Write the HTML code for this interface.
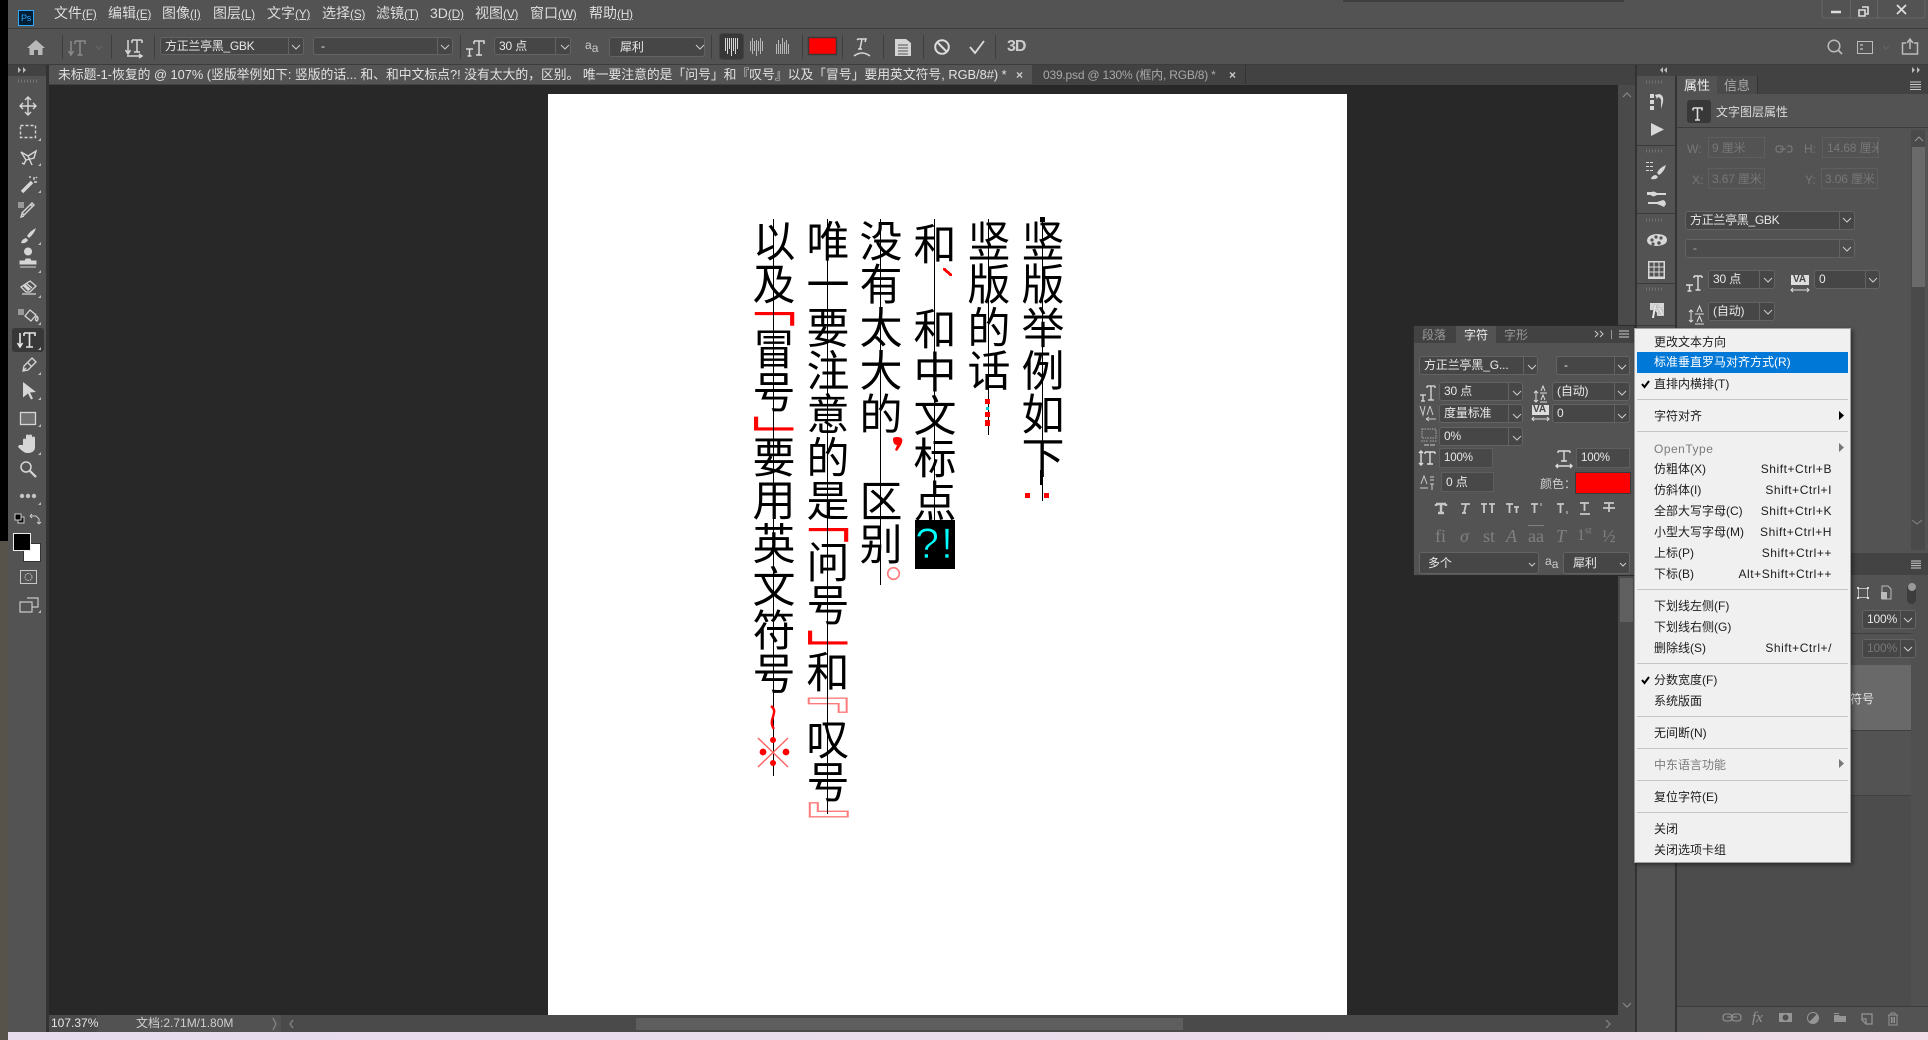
<!DOCTYPE html>
<html lang="zh"><head><meta charset="utf-8"><title>Photoshop</title>
<style>
html,body{margin:0;padding:0;width:1928px;height:1040px;overflow:hidden;background:#535353}
body{position:relative;font-family:"Liberation Sans","Noto Sans CJK SC",sans-serif;color:#dcdcdc;font-size:12px}
.a,.t,.f,.m,.col,.d{position:absolute}
.t{white-space:nowrap;height:16px;line-height:16px}
.f{box-sizing:border-box;background:#464646;border:1px solid #636363;border-radius:3px;color:#e8e8e8;line-height:17px;padding-left:4px;white-space:nowrap;overflow:hidden;font-size:12px;letter-spacing:-.15px}
.f i{position:absolute;top:0;bottom:0;width:1px;background:#636363}
.s{box-sizing:border-box;border-radius:0;border-color:#5e5e5e;background:#484848}
.dim{color:#777}
.n{font-size:14px;color:#dedede}
.n u{font-size:12px;letter-spacing:-.3px}
.m{left:1654px;width:178px;height:18px;line-height:18px;color:#1c1c1c;font-size:12px;white-space:nowrap}
.m b{position:absolute;right:0;top:0;font-weight:400;letter-spacing:.55px}
.d{left:1637px;width:211px;height:1px;background:#c4c4c4}
.col{writing-mode:vertical-rl;text-orientation:upright;font:400 43px/43px "Noto Sans CJK SC",sans-serif;color:#000;white-space:nowrap;width:43px;letter-spacing:.3px}
.r{color:#f00}.p{color:#ff7b7b}
.l{position:absolute;width:1px;background:#000}
u{text-decoration:underline}
</style></head><body>

<!-- backgrounds -->
<div class="a" style="left:0;top:0;width:8px;height:541px;background:#000"></div>
<div class="a" style="left:0;top:541px;width:8px;height:499px;background:#57534a"></div>
<div class="a" style="left:8px;top:1032px;width:1920px;height:8px;background:linear-gradient(90deg,#e6dcee,#eadcec 50%,#f1dce8)"></div>
<div class="a" style="left:8px;top:28px;width:1920px;height:1px;background:#3c3c3c"></div>
<div class="a" style="left:8px;top:64px;width:1920px;height:1px;background:#3c3c3c"></div>
<div class="a" style="left:1343px;top:0;width:281px;height:2px;background:#3f3f3f"></div>

<!-- tab row -->
<div class="a" style="left:46px;top:65px;width:1589px;height:20px;background:#424242"></div>
<div class="a" style="left:48px;top:65px;width:984px;height:19px;background:#545454"></div>
<div class="a" style="left:1245px;top:65px;width:1px;height:19px;background:#333"></div>
<!-- toolbar -->
<div class="a" style="left:8px;top:65px;width:38px;height:967px;background:#535353;border-right:3px solid #333;box-sizing:content-box"></div>
<div class="a" style="left:8px;top:65px;width:38px;height:11px;background:#424242"></div>
<!-- canvas -->
<div class="a" style="left:49px;top:85px;width:1569px;height:930px;background:#282828"></div>
<div class="a" style="left:1618px;top:85px;width:17px;height:947px;background:#4a4a4a"></div>
<div class="a" style="left:1620px;top:578px;width:13px;height:44px;background:#606060"></div>
<div class="a" style="left:548px;top:94px;width:799px;height:921px;background:#fff"></div>
<!-- status -->
<div class="a" style="left:49px;top:1015px;width:1569px;height:17px;background:#4a4a4a"></div>
<div class="a" style="left:97px;top:1015px;width:184px;height:17px;background:#525252"></div>
<div class="a" style="left:636px;top:1018px;width:547px;height:12px;background:#5e5e5e"></div>
<div class="a" style="left:1635px;top:65px;width:2px;height:967px;background:#333"></div>
<div class="a" style="left:1675px;top:76px;width:2px;height:956px;background:#333"></div>
<div class="a" style="left:1637px;top:65px;width:291px;height:11px;background:#424242"></div>

<!-- right panel -->
<div class="a" style="left:1677px;top:76px;width:251px;height:18px;background:#424242"></div>
<div class="a" style="left:1677px;top:76px;width:40px;height:18px;background:#535353"></div>
<div class="a" style="left:1717px;top:76px;width:40px;height:18px;background:#4a4a4a;border-right:1px solid #333"></div>
<div class="a" style="left:1677px;top:127px;width:251px;height:1px;background:#3c3c3c"></div>
<div class="a" style="left:1687px;top:100px;width:24px;height:23px;background:#383838;border-radius:3px"></div>
<div class="a" style="left:1911px;top:130px;width:14px;height:420px;background:#4a4a4a"></div>
<div class="a" style="left:1912px;top:147px;width:13px;height:140px;background:#6a6a6a"></div>
<div class="a" style="left:1677px;top:553px;width:251px;height:22px;background:#434343"></div>
<div class="a" style="left:1677px;top:575px;width:251px;height:431px;background:#4c4c4c"></div>
<div class="a" style="left:1911px;top:575px;width:17px;height:431px;background:#505050"></div>
<div class="a" style="left:1677px;top:575px;width:234px;height:58px;background:#535353"></div>
<div class="a" style="left:1677px;top:633px;width:234px;height:1px;background:#3f3f3f"></div>
<div class="a" style="left:1677px;top:634px;width:234px;height:31px;background:#535353"></div>
<div class="a" style="left:1677px;top:665px;width:234px;height:65px;background:#696969"></div>
<div class="a" style="left:1677px;top:730px;width:234px;height:1px;background:#3f3f3f"></div>
<div class="a" style="left:1677px;top:731px;width:234px;height:64px;background:#535353"></div>
<div class="a" style="left:1677px;top:795px;width:234px;height:1px;background:#424242"></div>
<div class="a" style="left:1677px;top:1006px;width:251px;height:1px;background:#3c3c3c"></div>
<div class="a" style="left:1677px;top:1007px;width:251px;height:25px;background:#535353"></div>

<!-- canvas text -->
<div class="col" style="left:1021px;top:219px">竖版举例如下</div>
<div class="col" style="left:967px;top:219px">竖版的话</div>
<div class="col" style="left:913px;top:222px">和</div>
<div class="a r" style="left:943px;top:268px;width:9px;height:8px;background:linear-gradient(40deg,transparent 38%,#f00 38%,#f00 62%,transparent 62%)"></div>
<div class="col" style="left:913px;top:307px">和中文</div>
<div class="col" style="left:913px;top:436px">标点</div>
<div class="col" style="left:859px;top:219px">没有太大的</div>
<div class="col" style="left:859px;top:479px">区别</div>
<div class="col" style="left:806px;top:219px">唯一要注意的是</div>
<div class="col r" style="left:806px;top:500px;transform:scaleX(1.3);transform-origin:100% 50%">「</div>
<div class="col" style="left:806px;top:540px">问号</div>
<div class="col r" style="left:806px;top:629px;transform:scaleX(1.3);transform-origin:0 50%">」</div>
<div class="col" style="left:806px;top:650px">和</div>
<div class="col p" style="left:806px;top:671px;transform:scaleX(1.4);transform-origin:100% 50%">『</div>
<div class="col" style="left:806px;top:717px">叹号</div>
<div class="col p" style="left:806px;top:801px;transform:scaleX(1.4);transform-origin:0 50%">』</div>
<div class="col" style="left:752px;top:219px">以及</div>
<div class="col r" style="left:752px;top:284px;transform:scaleX(1.3);transform-origin:100% 50%">「</div>
<div class="col" style="left:752px;top:327px">冒号</div>
<div class="col r" style="left:752px;top:415px;transform:scaleX(1.3);transform-origin:0 50%">」</div>
<div class="col" style="left:752px;top:435px">要用英文符号</div>

<div class="a" style="left:915px;top:520px;width:40px;height:49px;background:#000"></div>
<div class="a" style="left:915px;top:520px;width:40px;height:49px;font:400 43px/49px 'Liberation Sans',sans-serif;color:#0ff;text-align:center;letter-spacing:2px;-webkit-text-stroke:.8px #000">?!</div>

<!-- vertical baselines -->
<div class="l" style="left:1042px;top:219px;height:282px"></div>
<div class="a" style="left:1040px;top:217px;width:5px;height:5px;background:#000"></div>
<div class="a" style="left:1040px;top:470px;width:3px;height:15px;background:#000"></div>
<div class="l" style="left:988px;top:219px;height:216px"></div>
<div class="l" style="left:934px;top:219px;height:301px"></div>
<div class="l" style="left:880px;top:219px;height:366px"></div>
<div class="l" style="left:827px;top:219px;height:595px"></div>
<div class="l" style="left:773px;top:219px;height:557px"></div>

<!-- red punctuation -->
<svg class="a" style="left:0;top:0" width="1928" height="1040" viewBox="0 0 1928 1040">
<g fill="#f00">
<rect x="1025" y="493" width="5" height="5"/><rect x="1044" y="493" width="5" height="5"/>
<rect x="985" y="399" width="5" height="5"/><rect x="986" y="407" width="3" height="3" fill="#0cc"/><rect x="985" y="412" width="5" height="5"/><rect x="985" y="420" width="5" height="6"/>
<path d="M893 439q0-2 4-2t5 2q1 2-1 6l-4 6-2-1 2-5q-4 0-4-6z"/>
<circle cx="763" cy="752" r="3.4"/><circle cx="786" cy="752" r="3.4"/><circle cx="773" cy="740" r="3"/><circle cx="773" cy="763" r="3"/>
</g>
<circle cx="893.5" cy="573.500" r="5.800" fill="none" stroke="#ff7b7b" stroke-width="1.600"/>
<path d="M758 738l30 29M788 738l-30 29" stroke="#f66" stroke-width="1.500" fill="none"/>
<path d="M771 706q4 3 3 7t-2 7q-1 5 2 9" stroke="#f00" stroke-width="2.400" fill="none"/>
</svg>

<!-- all UI icons -->
<svg class="a" style="left:0;top:0" width="1928" height="1040" viewBox="0 0 1928 1040">
<!-- PS logo -->
<rect x="18.500" y="10.500" width="15" height="15" fill="#001e36" stroke="#31a8ff"/>
<!-- options separators -->
<path d="M62.500 35v24M111.500 35v24M154.500 35v24M460.500 35v24M711.500 35v24M802.500 35v24M842.500 35v24M883.500 35v24M923.500 35v24M995.500 35v24" stroke="#3e3e3e"/>
<!-- home -->
<path d="M36 40l9 8h-2.500v7h-4.500v-5h-4v5h-4.500v-7h-2.500z" fill="#b8b8b8"/>
<!-- vertical T -->
<path d="M71 41v13M68.500 51l2.500 4 2.500-4M75 41h10v3M75 41v3M80 41v14M77.500 55h5" stroke="#8a8a8a" stroke-width="1.500" fill="none"/>
<path d="M96 46l3 3 3-3" stroke="#666" fill="none"/>
<path d="M128 40v13M125.500 50l2.500 4 2.500-4M132 40h10M132 40v3M142 40v3M137 40v12M134 52h6M127 56h14M139 54l3 2-3 2" stroke="#d8d8d8" stroke-width="1.500" fill="none"/>
<!-- TT icon -->
<path d="M466 49h7M469.500 49v7M467.500 56h4M474 41h10v3M474 41v3M484 41v3M479 41v14M476 55h6" stroke="#d8d8d8" stroke-width="1.500" fill="none"/>
<!-- align -->
<rect x="719.500" y="33.500" width="24" height="26" rx="3" fill="#383838" stroke="#444"/>
<path d="M725.500 38v13M727.500 38v16M729.500 38v11M731.500 38v18M733.500 38v13M735.500 38v16M737.500 38v11" stroke="#d8d8d8"/>
<path d="M750.500 41v10M752.500 38v16M754.500 41v10M756.500 40v16M758.500 41v10M760.500 38v16M762.500 41v10" stroke="#b8b8b8"/>
<path d="M776.500 44v10M778.500 40v14M780.500 44v10M782.500 38v16M784.500 42v12M786.500 40v14M788.500 44v10" stroke="#b8b8b8"/>
<!-- color -->
<rect x="808.500" y="37.500" width="28" height="17" fill="#f00" stroke="#3a3a3a" stroke-width="1.500"/>
<!-- warp -->
<path d="M857 40l1-1h8l-1 3M862 39l-2 10M858 49h4M854 56q8-6 16 0" stroke="#d8d8d8" stroke-width="1.500" fill="none"/>
<!-- panel icon -->
<path d="M895 39h11l5 4v13h-16z" fill="#d4d4d4"/>
<path d="M898 45h10M898 48h10M898 51h10M898 54h10" stroke="#535353"/>
<!-- cancel -->
<circle cx="942" cy="47" r="6.800" fill="none" stroke="#dcdcdc" stroke-width="2"/><path d="M937 42l10 10" stroke="#dcdcdc" stroke-width="2"/>
<path d="M970 47l5 6 9-12" stroke="#dcdcdc" stroke-width="1.800" fill="none"/>
<!-- top right -->
<path d="M1831 12h10" stroke="#ddd" stroke-width="2.500"/>
<path d="M1862 7h6v7h-2M1859 10h6v6h-6z" fill="none" stroke="#ddd" stroke-width="1.600"/>
<path d="M1897 5l9 9M1906 5l-9 9" stroke="#ddd" stroke-width="1.800"/>
<path d="M1822 0v15q0 3 3 3h97q3 0 3-3V0M1850.500 0v18M1877.500 0v18" stroke="#666" fill="none"/>
<circle cx="1834" cy="46" r="5.800" fill="none" stroke="#bbb" stroke-width="1.500"/><path d="M1838 50l4 4" stroke="#bbb" stroke-width="1.800"/>
<rect x="1857.500" y="41.500" width="15" height="12" fill="none" stroke="#bbb"/><path d="M1860 44h3v2h-3zM1860 48h3v2h-3z" fill="#999"/>
<path d="M1883 46l3 3 3-3" stroke="#666" fill="none"/>
<path d="M1906 43h-3.500v11h15V43h-3.500M1910 49V40M1907 43l3-4 3 4" stroke="#bbb" stroke-width="1.500" fill="none"/>
<!-- collapse arrows -->
<path d="M18 67l3 3-3 3zM23 67l3 3-3 3zM1667 67l-3 3 3 3zM1663 67l-3 3 3 3zM1912 67l3 3-3 3zM1917 67l3 3-3 3z" fill="#bbb"/>
<!-- grips -->
<path d="M18 81h1m2 0h1m2 0h1m2 0h1m2 0h1m2 0h1m2 0h1" stroke="#777" stroke-width="3"/>
<path d="M1646 82h1m2 0h1m2 0h1m2 0h1m2 0h1m2 0h1M1646 151h1m2 0h1m2 0h1m2 0h1m2 0h1m2 0h1M1646 220h1m2 0h1m2 0h1m2 0h1m2 0h1m2 0h1M1646 289h1m2 0h1m2 0h1m2 0h1m2 0h1m2 0h1" stroke="#727272" stroke-width="3"/>
<path d="M1637 145.500h38M1637 213.500h38M1637 283.500h38M1637 325.500h38" stroke="#3a3a3a"/>

<!-- toolbar -->
<g fill="none" stroke="#d6d6d6" stroke-width="1.400">
<path d="M28 97v18M20 106h16M25 100l3-3 3 3M25 112l3 3 3-3M23 103l-3 3 3 3M33 103l3 3-3 3"/>
<rect x="20.500" y="125.500" width="15" height="12" stroke-dasharray="3 2"/>
<path d="M21 152l7 4 8-5-2 7-8 2zM26 160l-2 4-2-1M28 156l4 9"/>
<path d="M22 192l10-10" stroke-width="3.400"/><path d="M34 177v3M37 182h-3M30 176v2M37 177l-1 1"/>
<path d="M34 205l-2-2-10 10 2 2zM31 205l2 2M22 214l-1 3 3-1"/>
<rect x="18" y="202" width="6" height="6" fill="#999" stroke="none"/>
</g>
<path d="M36 228q-6 3-9 8l2 2q5-4 7-10zM26 238q-4 1-5 5 5 1 7-3z" fill="#d6d6d6"/>
<path d="M28 255a3.500 3.500 0 1 1 .1 0zM26 259h4l1 2h5v3H20v-3h5zM20 267h16" fill="#d6d6d6" stroke="#d6d6d6"/>
<path d="M30 281l6 5-6 6h-4l-5-5zM26 283l6 5M22 294h14" stroke="#d6d6d6" stroke-width="1.300" fill="none"/>
<path d="M25 284l6 5-3 2-5-5z" fill="#d6d6d6"/>
<path d="M30 310l6 5-5 6-6-5zM37 316q2 3 0 5-3-1 0-5" stroke="#d6d6d6" stroke-width="1.300" fill="none"/><rect x="18" y="309" width="6" height="6" fill="#999"/>
<rect x="12" y="328" width="32" height="24" rx="3" fill="#383838"/>
<path d="M20 333v13M17.500 343l2.500 4 2.500-4M24 333h11v3M24 333v3M29.500 333v14M26 347h7" stroke="#e6e6e6" stroke-width="1.600" fill="none"/>
<path d="M32 358l4 4-8 8-5 1 1-5zM28 363l3 3M23 371l3-3" stroke="#d6d6d6" stroke-width="1.300" fill="none"/>
<path d="M23 382l13 10-6 .5 3 6-2 1-3-6-5 4z" fill="#d6d6d6"/>
<rect x="20.500" y="412.500" width="15" height="12" fill="#717171" stroke="#d6d6d6" stroke-width="1.300"/>
<path d="M23 445v-5q0-1.500 1.500-1.500t1.500 1.500v3-7q0-1.500 1.500-1.500t1.500 1.500v6-6q0-1.500 1.500-1.500t1.500 1.500v7-5q0-1.500 1.500-1.500t1.500 1.500v9q0 5-6 6h-3q-3-1-8-6l1-2z" fill="#d6d6d6"/>
<circle cx="26" cy="467" r="5" fill="none" stroke="#d6d6d6" stroke-width="1.500"/><path d="M30 471l6 6" stroke="#d6d6d6" stroke-width="2.200"/>
<circle cx="22" cy="496" r="2.200" fill="#c4c4c4"/><circle cx="28" cy="496" r="2.200" fill="#c4c4c4"/><circle cx="34" cy="496" r="2.200" fill="#c4c4c4"/>
<!-- tool corner triangles -->
<path d="M41 138v3h-3zM41 163v3h-3zM41 190v3h-3zM41 242v3h-3zM41 270v3h-3zM41 295v3h-3zM41 322v3h-3zM41 347v3h-3zM41 372v3h-3zM41 397v3h-3zM41 424v3h-3zM41 452v3h-3zM41 502v3h-3zM41 610v3h-3z" fill="#bbb"/>
<rect x="18" y="517" width="6" height="6" fill="#111" stroke="#ccc"/><rect x="15" y="514" width="6" height="6" fill="#000" stroke="#ccc"/>
<path d="M31 516h5l3 3v4M30 516l2-2M30 516l2 2M39 524l-2-2M39 524l2-2" stroke="#ccc" fill="none"/>
<rect x="23.500" y="543.500" width="17" height="18" fill="#fff" stroke="#333"/>
<rect x="13.500" y="533.500" width="17" height="17" fill="#000" stroke="#eee"/>
<rect x="20.500" y="570.500" width="16" height="13" fill="none" stroke="#c8c8c8"/><circle cx="28.500" cy="577" r="3.500" fill="none" stroke="#c8c8c8" stroke-dasharray="1.500 1"/>
<path d="M27 598h11v9H32M20 602h12v10H20z" fill="none" stroke="#c8c8c8" stroke-width="1.200"/>

<!-- canvas chevrons -->
<path d="M1623 97l4-4 4 4M1623 1003l4 4 4-4M1606 1020l4 4-4 4M293 1020l-3 4 3 4M273 1018l3 6-3 6" stroke="#888" fill="none" stroke-width="1.200"/>

<!-- dock icons -->
<g fill="#d8d8d8">
<path d="M1650 94h4v4h-4zM1650 100h4v4h-4zM1650 106h4v4h-4z"/>
<path d="M1659 94q5 1 4 8l-2 7 0-6q1-5-3-6l-1 2-2-4z"/>
<path d="M1651 123l13 6.500-13 6.500z"/>
<path d="M1646 162h3v1h-3zM1646 166h3v1h-3zM1646 170h3v1h-3zM1650 162h3v1h-3zM1650 166h3v1h-3zM1650 170h3v1h-3z"/>
<path d="M1666 165q-7 3-9 8l2 2q5-3 7-10zM1656 175q-4 0-5 4 5 1 7-2z"/>
<path d="M1647 192h5q1-1 3 0l2 1h9v2h-9l-2 1q-3 1-4-1h-4zM1648 202h9l6-2 2 1 1 3-2 3-2-1-5-2h-9z"/>
<path d="M1656 234q11 0 11 6 0 5-10 6-9 0-10-5 0-6 9-7z"/>
<path d="M1648 261h17v18h-17zm1.500 1.500v4h4v-4zm5 0v4h4v-4zm5 0v4h4v-4zm-10 5v4h4v-4zm5 0v4h4v-4zm5 0v4h4v-4zm-10 5v4h4v-4zm5 0v4h4v-4zm5 0v4h4v-4z" fill-rule="evenodd"/>
<path d="M1650 303h14v13h-7q1-6-7-6z"/>
</g>
<g fill="#535353"><circle cx="1652" cy="240" r="1.600"/><circle cx="1656" cy="237" r="1.600"/><circle cx="1661" cy="238" r="1.600"/><circle cx="1653" cy="244" r="1.600"/><circle cx="1659" cy="243" r="1.800"/></g>

<!-- properties -->
<path d="M1693 108h9v2.500M1693 108v2.500M1697.500 108v12M1695 120h5" stroke="#ddd" stroke-width="1.600" fill="none"/>
<path d="M1910 82h11M1910 84.500h11M1910 87h11M1910 89.500h11" stroke="#ccc"/>
<path d="M1780 149h6M1778 146h3q2 0 2 3t-2 3h-3q-2 0-2-3t2-3M1787 146h3q2 0 2 3t-2 3h-3" stroke="#777" fill="none" stroke-width="1.200"/>
<path d="M1915 141l4-4 4 4" stroke="#999" fill="none"/>
<path d="M1686 285h7M1689.500 285v6M1687.500 291h4M1694 276h8M1694 276v2M1702 276v2M1698 276v14M1695.500 290h5" stroke="#ddd" stroke-width="1.400" fill="none"/>
<rect x="1791" y="275" width="18" height="10" fill="#ddd"/>
<path d="M1791 290h18M1793 288l-2 2 2 2M1807 288l2 2-2 2" stroke="#ddd" fill="none"/>
<path d="M1691 310v12M1689 312l2-2 2 2M1689 320l2 2 2-2M1695 314h9M1695 324h9M1697 312l2.500-6 2.500 6M1697 322l2.500-6 2.500 6" stroke="#ddd" fill="none"/>

<!-- layers fragments -->
<path d="M1911 561h10M1911 563.300h10M1911 565.600h10M1911 568h10" stroke="#ccc"/>
<rect x="1858.500" y="588.500" width="9" height="9" fill="none" stroke="#bbb"/>
<path d="M1857 587h2v2h-2zM1867 587h2v2h-2zM1857 597h2v2h-2zM1867 597h2v2h-2z" fill="#ddd"/>
<path d="M1882 586h6l3 3v10h-9z" fill="none" stroke="#bbb"/><rect x="1881" y="592" width="6" height="7" fill="#bbb"/>
<rect x="1907" y="584" width="9" height="20" rx="4.500" fill="#3c3c3c"/><circle cx="1912" cy="587" r="4" fill="#999"/>
<path d="M1912 520l5 4 5-4" stroke="#777" fill="none" stroke-width="1.300"/>

<!-- layer bottom icons -->
<g fill="#959595">
<rect x="1779" y="1013" width="13" height="9"/>
<path d="M1834 1015h5l1 1h6v6h-12z"/><path d="M1834 1013h5v1h-5z"/>
</g>
<circle cx="1785.500" cy="1017.500" r="3" fill="#4f4f4f"/>
<circle cx="1813" cy="1018" r="5.500" fill="#4f4f4f" stroke="#959595"/><path d="M1809 1022l8-8a5.500 5.500 0 0 1-8 8z" fill="#959595"/>
<path d="M1727 1017h10M1726 1014h3q3 0 3 3.500t-3 3.500h-3q-3 0-3-3.500t3-3.500M1735 1014h3q3 0 3 3.500t-3 3.500h-3q-3 0-3-3.500t3-3.500" stroke="#959595" fill="none" stroke-width="1.100"/>
<path d="M1862 1014h10v10h-6l-4-4zM1862 1019h4v5" stroke="#959595" fill="none" stroke-width="1.200"/>
<path d="M1888 1015h10M1891 1015v-2h4v2M1889 1015v10h8v-10M1891.500 1017v6M1893 1017v6M1894.500 1017v6" stroke="#959595" fill="none"/>
</svg>
<div class="t" style="left:1652px;top:303px;font:italic 700 15px/16px 'Liberation Serif',serif;color:#e8e8e8;text-shadow:0 0 1px #535353">fx</div>
<div class="t" style="left:1752px;top:1010px;font:italic 400 15px/16px 'Liberation Serif',serif;color:#959595">fx</div>
<div class="t" style="left:1793px;top:274px;font:700 10px/12px 'Liberation Sans',sans-serif;color:#444;height:12px">VA</div>

<!-- menu bar -->
<div class="t" style="left:21px;top:10px;color:#31a8ff;font-size:9px;letter-spacing:-.3px">Ps</div>
<div class="t n" style="left:54px;top:5px">文件<u>(F)</u></div>
<div class="t n" style="left:108px;top:5px">编辑<u>(E)</u></div>
<div class="t n" style="left:162px;top:5px">图像<u>(I)</u></div>
<div class="t n" style="left:213px;top:5px">图层<u>(L)</u></div>
<div class="t n" style="left:267px;top:5px">文字<u>(Y)</u></div>
<div class="t n" style="left:322px;top:5px">选择<u>(S)</u></div>
<div class="t n" style="left:376px;top:5px">滤镜<u>(T)</u></div>
<div class="t n" style="left:430px;top:5px">3D<u>(D)</u></div>
<div class="t n" style="left:475px;top:5px">视图<u>(V)</u></div>
<div class="t n" style="left:530px;top:5px">窗口<u>(W)</u></div>
<div class="t n" style="left:589px;top:5px">帮助<u>(H)</u></div>

<!-- options fields -->
<div class="f" style="left:160px;top:37px;width:144px;height:18px;letter-spacing:-.3px;line-height:16px">方正兰亭黑_GBK<i style="left:127px"></i></div>
<div class="f" style="left:313px;top:37px;width:140px;height:18px;padding-left:7px;line-height:16px">-<i style="left:123px"></i></div>
<div class="f" style="left:494px;top:37px;width:77px;height:18px;line-height:16px">30 点<i style="left:60px"></i></div>
<div class="t" style="left:585px;top:37px;font-size:12px;color:#ccc">a<span style="position:relative;top:3px">a</span></div>
<div class="f" style="left:609px;top:37px;width:96px;height:20px;padding-left:10px;line-height:18px">犀利</div>
<div class="t" style="left:1007px;top:39px;font-weight:700;font-size:16px;color:#ccc;letter-spacing:-1px">3D</div>

<!-- tabs -->
<div class="t" style="left:58px;top:67px;font-size:12.800px;color:#e2e2e2">未标题-1-恢复的 @ 107% (竖版举例如下: 竖版的话... 和、和中文标点?! 没有太大的，区别。 唯一要注意的是「问号」和『叹号』以及「冒号」要用英文符号, RGB/8#) *</div>
<div class="t" style="left:1016px;top:67px;color:#ccc;font-weight:700">×</div>
<div class="t" style="left:1043px;top:67px;font-size:12px;letter-spacing:-.2px;color:#a8a8a8">039.psd @ 130% (框内, RGB/8) *</div>
<div class="t" style="left:1229px;top:67px;color:#ccc;font-weight:700">×</div>

<!-- status text -->
<div class="t" style="left:51px;top:1015px;color:#e6e6e6">107.37%</div>
<div class="t" style="left:136px;top:1015px;color:#cfcfcf">文档:2.71M/1.80M</div>

<!-- properties text -->
<div class="t" style="left:1684px;top:78px;color:#eee;font-size:13px">属性</div>
<div class="t" style="left:1724px;top:78px;color:#aaa;font-size:13px">信息</div>
<div class="t" style="left:1716px;top:104px;color:#dcdcdc;font-size:12px">文字图层属性</div>
<div class="t dim" style="left:1687px;top:141px">W:</div>
<div class="f s dim" style="left:1708px;top:137px;width:57px;height:21px;line-height:20px;padding-left:3px;background:#535353">9 厘米</div>
<div class="t dim" style="left:1804px;top:141px">H:</div>
<div class="f s dim" style="left:1822px;top:137px;width:57px;height:21px;line-height:20px;background:#535353">14.68 厘米</div>
<div class="t dim" style="left:1692px;top:172px">X:</div>
<div class="f s dim" style="left:1708px;top:168px;width:57px;height:21px;line-height:20px;padding-left:3px;background:#535353">3.67 厘米</div>
<div class="t dim" style="left:1805px;top:172px">Y:</div>
<div class="f s dim" style="left:1821px;top:168px;width:57px;height:21px;line-height:20px;padding-left:3px;background:#535353">3.06 厘米</div>
<div class="f" style="left:1685px;top:211px;width:170px;height:19px;letter-spacing:-.3px">方正兰亭黑_GBK<i style="left:153px"></i></div>
<div class="f" style="left:1685px;top:239px;width:170px;height:19px;padding-left:7px;color:#aaa;background:#4c4c4c">-<i style="left:153px"></i></div>
<div class="f" style="left:1708px;top:270px;width:67px;height:19px">30 点<i style="left:50px"></i></div>
<div class="f" style="left:1814px;top:270px;width:66px;height:19px">0<i style="left:50px"></i></div>
<div class="f" style="left:1708px;top:302px;width:67px;height:19px">(自动)<i style="left:50px"></i></div>

<!-- layers text -->
<div class="f" style="left:1862px;top:610px;width:54px;height:19px">100%<i style="left:37px"></i></div>
<div class="f dim" style="left:1862px;top:639px;width:54px;height:19px">100%<i style="left:37px"></i></div>

<!-- character panel -->
<div class="a" style="left:1414px;top:326px;width:220px;height:249px;background:#535353;box-shadow:0 0 0 1px #2c2c2c"></div>
<div class="a" style="left:1414px;top:326px;width:220px;height:17px;background:#424242"></div>
<div class="a" style="left:1456px;top:326px;width:40px;height:17px;background:#535353"></div>
<div class="t" style="left:1422px;top:327px;color:#999">段落</div>
<div class="t" style="left:1464px;top:327px;color:#eee">字符</div>
<div class="t" style="left:1504px;top:327px;color:#999">字形</div>
<div class="f" style="left:1419px;top:356px;width:119px;height:19px">方正兰亭黑_G...<i style="left:103px"></i></div>
<div class="f" style="left:1556px;top:356px;width:74px;height:19px;padding-left:7px">-<i style="left:57px"></i></div>
<div class="f" style="left:1439px;top:382px;width:84px;height:19px">30 点<i style="left:68px"></i></div>
<div class="f" style="left:1552px;top:382px;width:78px;height:19px">(自动)<i style="left:61px"></i></div>
<div class="f" style="left:1439px;top:404px;width:84px;height:19px">度量标准<i style="left:68px"></i></div>
<div class="f" style="left:1552px;top:404px;width:78px;height:19px">0<i style="left:61px"></i></div>
<div class="f" style="left:1439px;top:427px;width:84px;height:19px">0%<i style="left:68px"></i></div>
<div class="f s" style="left:1439px;top:448px;width:54px;height:20px;font-size:11.500px;line-height:19px">100%</div>
<div class="f s" style="left:1576px;top:448px;width:54px;height:20px;font-size:11.500px;line-height:19px">100%</div>
<div class="f s" style="left:1441px;top:472px;width:53px;height:20px;font-size:12px;line-height:19px">0 点</div>
<div class="t" style="left:1540px;top:476px;color:#ccc">颜色：</div>
<div class="a" style="left:1576px;top:473px;width:54px;height:20px;background:#f00;outline:1px solid #3a3a3a"></div>
<div class="f" style="left:1419px;top:552px;width:120px;height:22px;padding-left:8px;line-height:20px">多个</div>
<div class="t" style="left:1545px;top:553px;font-size:12px;color:#ccc">a<span style="position:relative;top:3px">a</span></div>
<div class="f" style="left:1563px;top:552px;width:67px;height:22px;padding-left:9px;line-height:20px">犀利</div>

<svg class="a" style="left:0;top:0" width="1928" height="1040" viewBox="0 0 1928 1040">
<!-- field chevrons -->
<path d="M292 45l4 4 4-4M441 45l4 4 4-4M561 45l4 4 4-4M696 45l4 4 4-4M1843 218l4 4 4-4M1843 247l4 4 4-4M1764 278l4 4 4-4M1869 278l4 4 4-4M1764 310l4 4 4-4M1904 618l4 4 4-4M1904 647l4 4 4-4" stroke="#ccc" fill="none"/>
<path d="M1595 331l3 3-3 3M1600 331l3 3-3 3" stroke="#ccc" fill="none"/>
<path d="M1611.500 330v9" stroke="#999"/>
<path d="M1619 331h10M1619 334h10M1619 337h10" stroke="#ccc"/>
<path d="M1528 365l4 4 4-4M1618 365l4 4 4-4M1513 391l4 4 4-4M1618 391l4 4 4-4M1513 414l4 4 4-4M1618 414l4 4 4-4M1513 436l4 4 4-4M1529 563l3 3 3-3M1620 563l3 3 3-3" stroke="#ccc" fill="none"/>
<path d="M1420 395h6M1423 395v6M1421 401h4M1427 386h8M1427 386v2M1435 386v2M1431 386v14M1428 400h6" stroke="#ddd" stroke-width="1.300" fill="none"/>
<path d="M1536 391v11M1534 393l2-2 2 2M1534 400l2 2 2-2M1540 393h7M1540 402h7M1541 391l2-5 2 5M1541 400l2-5 2 5" stroke="#ddd" fill="none"/>
<path d="M1420 406l3 9 2-9M1427 415l3-9M1430 406l3 9M1426 419h10M1426 419l3-2M1426 419l3 2" stroke="#ccc" fill="none"/>
<rect x="1532" y="405" width="17" height="10" fill="#ddd"/>
<path d="M1532 419h17M1534 417l-2 2 2 2M1547 417l2 2-2 2" stroke="#ddd" fill="none"/>
<path d="M1422 429h14v9h-14zM1421 441h7M1430 441h7" stroke="#aaa" stroke-dasharray="1.500 1" fill="none"/>
<path d="M1424 445h5M1430 445h5" stroke="#ccc"/>
<path d="M1421 451v14M1419 453l2-2 2 2M1419 463l2 2 2-2M1425 452h10M1425 452v2M1435 452v2M1430 452v12M1427 464h6" stroke="#ddd" stroke-width="1.400" fill="none"/>
<path d="M1558 451h12M1558 451v2M1570 451v2M1564 451v10M1561 461h6M1556 466h16M1558 464l-2 2 2 2M1570 464l2 2-2 2" stroke="#ddd" stroke-width="1.400" fill="none"/>
<path d="M1421 484l3-8 3 8M1420 488h8M1430 477h4M1430 480h4M1430 484h4M1432 484v6" stroke="#ccc" fill="none"/>
<g stroke="#c8c8c8" fill="none" stroke-width="1.800">
<path d="M1436 504h10M1436 504v2M1446 504v2M1441 504v9M1438 513h6" stroke-width="2.400"/>
<path d="M1461 504h9M1466 504l-2 9M1462 513h4"/>
<path d="M1481 504h6M1484 504v9M1489 504h6M1492 504v9"/>
<path d="M1506 504h7M1509.500 504v9M1514 507h5M1516.500 507v6"/>
<path d="M1531 504h7M1534.500 504v9"/><path d="M1541 503v3" stroke-width="1"/>
<path d="M1557 504h7M1560.500 504v9"/><path d="M1567 511v3" stroke-width="1"/>
<path d="M1580 503h9M1584.500 503v8M1580 514h10"/>
<path d="M1604 503h10M1609 503v9M1603 508h12"/>
</g>
</svg>
<div class="t" style="left:1435px;top:527px;font:400 18px/18px 'Liberation Serif',serif;color:#808080;height:18px">fi</div>
<div class="t" style="left:1460px;top:527px;font:italic 400 18px/18px 'Liberation Serif',serif;color:#808080;height:18px">σ</div>
<div class="t" style="left:1483px;top:527px;font:400 18px/18px 'Liberation Serif',serif;color:#808080;height:18px">st</div>
<div class="t" style="left:1506px;top:527px;font:italic 400 18px/18px 'Liberation Serif',serif;color:#808080;height:18px">A</div>
<div class="t" style="left:1528px;top:527px;font:400 18px/18px 'Liberation Serif',serif;color:#808080;height:18px;text-decoration:overline">aa</div>
<div class="t" style="left:1556px;top:527px;font:italic 400 18px/18px 'Liberation Serif',serif;color:#808080;height:18px">T</div>
<div class="t" style="left:1577px;top:527px;font:400 16px/18px 'Liberation Serif',serif;color:#808080;height:18px">1<sup style="font-size:10px;line-height:0">st</sup></div>
<div class="t" style="left:1602px;top:527px;font:400 18px/18px 'Liberation Serif',serif;color:#808080;height:18px">½</div>
<div class="t" style="left:1533px;top:404px;font:700 10px/12px 'Liberation Sans',sans-serif;color:#444;height:12px">VA</div>

<!-- context menu -->
<div class="t" style="left:1850px;top:691px;color:#e4e4e4;font-size:12px">符号</div>
<div class="a" style="left:1634px;top:328px;width:217px;height:535px;background:#f0f0f0;box-sizing:border-box;border:1px solid #a0a0a0;box-shadow:2px 2px 4px rgba(0,0,0,.45)"></div>
<div class="a" style="left:1637px;top:352px;width:211px;height:21px;background:#0078d7"></div>
<div class="m" style="top:333px">更改文本方向</div>
<div class="m" style="top:353px;color:#fff">标准垂直罗马对齐方式(R)</div>
<div class="m" style="top:375px">直排内横排(T)</div>
<div class="d" style="top:399px"></div>
<div class="m" style="top:407px">字符对齐</div>
<div class="d" style="top:431px"></div>
<div class="m" style="top:440px;color:#7a7a7a;letter-spacing:.5px">OpenType</div>
<div class="m" style="top:460px">仿粗体(X)<b>Shift+Ctrl+B</b></div>
<div class="m" style="top:481px">仿斜体(I)<b>Shift+Ctrl+I</b></div>
<div class="m" style="top:502px">全部大写字母(C)<b>Shift+Ctrl+K</b></div>
<div class="m" style="top:523px">小型大写字母(M)<b>Shift+Ctrl+H</b></div>
<div class="m" style="top:544px">上标(P)<b>Shift+Ctrl++</b></div>
<div class="m" style="top:565px">下标(B)<b>Alt+Shift+Ctrl++</b></div>
<div class="d" style="top:589px"></div>
<div class="m" style="top:597px">下划线左侧(F)</div>
<div class="m" style="top:618px">下划线右侧(G)</div>
<div class="m" style="top:639px">删除线(S)<b>Shift+Ctrl+/</b></div>
<div class="d" style="top:663px"></div>
<div class="m" style="top:671px">分数宽度(F)</div>
<div class="m" style="top:692px">系统版面</div>
<div class="d" style="top:716px"></div>
<div class="m" style="top:724px">无间断(N)</div>
<div class="d" style="top:748px"></div>
<div class="m" style="top:756px;color:#7a7a7a">中东语言功能</div>
<div class="d" style="top:780px"></div>
<div class="m" style="top:788px">复位字符(E)</div>
<div class="d" style="top:812px"></div>
<div class="m" style="top:820px">关闭</div>
<div class="m" style="top:841px">关闭选项卡组</div>
<svg class="a" style="left:0;top:0" width="1928" height="1040" viewBox="0 0 1928 1040">
<path d="M1839 411l5 4.500-5 4.500z" fill="#000"/>
<path d="M1839 443l5 4.500-5 4.500zM1839 759l5 4.500-5 4.500z" fill="#777"/>
<path d="M1642 384l2.500 3 4.500-6M1642 680l2.500 3 4.500-6" stroke="#000" stroke-width="2" fill="none"/>
</svg>
</body></html>
